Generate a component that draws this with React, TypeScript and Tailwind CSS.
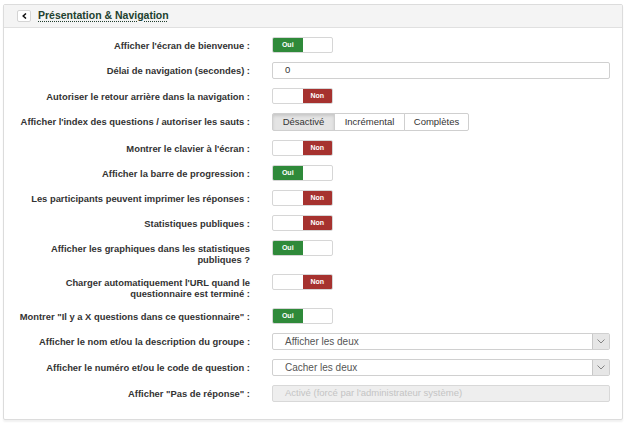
import React from "react";

type Row =
  | { label: string[]; kind: "toggle"; on: boolean }
  | { label: string[]; kind: "text"; value: string }
  | { label: string[]; kind: "select"; value: string }
  | { label: string[]; kind: "disabled"; value: string }
  | { label: string[]; kind: "segment" };

const rows: Row[] = [
  { label: ["Afficher l'écran de bienvenue :"], kind: "toggle", on: true },
  { label: ["Délai de navigation (secondes) :"], kind: "text", value: "0" },
  { label: ["Autoriser le retour arrière dans la navigation :"], kind: "toggle", on: false },
  { label: ["Afficher l'index des questions / autoriser les sauts :"], kind: "segment" },
  { label: ["Montrer le clavier à l'écran :"], kind: "toggle", on: false },
  { label: ["Afficher la barre de progression :"], kind: "toggle", on: true },
  { label: ["Les participants peuvent imprimer les réponses :"], kind: "toggle", on: false },
  { label: ["Statistiques publiques :"], kind: "toggle", on: false },
  { label: ["Afficher les graphiques dans les statistiques", "publiques ?"], kind: "toggle", on: true },
  { label: ["Charger automatiquement l'URL quand le", "questionnaire est terminé :"], kind: "toggle", on: false },
  { label: ['Montrer "Il y a X questions dans ce questionnaire" :'], kind: "toggle", on: true },
  { label: ["Afficher le nom et/ou la description du groupe :"], kind: "select", value: "Afficher les deux" },
  { label: ["Afficher le numéro et/ou le code de question :"], kind: "select", value: "Cacher les deux" },
  { label: ['Afficher "Pas de réponse" :'], kind: "disabled", value: "Activé (forcé par l'administrateur système)" },
];

function Toggle({ on }: { on: boolean }) {
  return (
    <div className="flex h-[16px] w-[61px] overflow-hidden rounded-[2px] border border-[#d6d6d6] bg-white text-[7px] font-bold text-white">
      {on ? (
        <>
          <div className="flex w-1/2 items-center justify-center bg-[#2f8a3a]">Oui</div>
          <div className="w-1/2" />
        </>
      ) : (
        <>
          <div className="w-1/2" />
          <div className="flex w-1/2 items-center justify-center bg-[#a6322f]">Non</div>
        </>
      )}
    </div>
  );
}

function Segment() {
  const items = [
    { t: "Désactivé", w: "w-[63px]", active: true },
    { t: "Incrémental", w: "w-[71px]", active: false },
    { t: "Complètes", w: "w-[65px]", active: false },
  ];
  return (
    <div className="flex h-[18px] text-[9.5px] text-[#333]">
      {items.map((it, i) => (
        <div
          key={it.t}
          className={`flex items-center justify-center border border-[#cfcfcf] ${it.w} ${
            i > 0 ? "-ml-px" : "rounded-l-[2px]"
          } ${i === 2 ? "rounded-r-[2px]" : ""} ${
            it.active ? "bg-[#e4e4e4] shadow-[inset_0_2px_3px_rgba(0,0,0,0.12)]" : "bg-white"
          }`}
        >
          {it.t}
        </div>
      ))}
    </div>
  );
}

function Control({ row }: { row: Row }) {
  if (row.kind === "toggle") return <Toggle on={row.on} />;
  if (row.kind === "segment") return <Segment />;
  if (row.kind === "text")
    return (
      <div className="flex h-[17px] w-full items-center rounded-[2px] border border-[#d0d0d0] bg-white pl-[12px] text-[9.5px] text-[#333]">
        {row.value}
      </div>
    );
  if (row.kind === "select")
    return (
      <div className="flex h-[17px] w-full items-center rounded-[2px] border border-[#d0d0d0] bg-white text-[10px] text-[#555]">
        <span className="flex-1 pl-[12px]">{row.value}</span>
        <span className="flex h-full w-[17px] items-center justify-center border-l border-[#c8c8c8] bg-[#e6e6e6]">
          <svg width="8" height="5" viewBox="0 0 8 5" fill="none">
            <path d="M0.5 0.5 L4 4 L7.5 0.5" stroke="#777" strokeWidth="0.9" />
          </svg>
        </span>
      </div>
    );
  return (
    <div className="flex h-[17px] w-full items-center rounded-[2px] border border-[#d8d8d8] bg-[#eeeeee] pl-[12px] text-[9.5px] text-[#c4c4c4]">
      {row.value}
    </div>
  );
}

export default function App() {
  return (
    <div className="min-h-screen bg-white pl-[3px] pt-[4px] font-['Liberation_Sans',Arial,sans-serif]">
      <div className="w-[620px] rounded-[2px] border border-[#dcdcdc] bg-white shadow-[0_2px_2px_rgba(0,0,0,0.06)]">
        <div className="flex h-[23px] items-center gap-[7px] border-b border-[#e0e0e0] bg-[#f4f4f4] pl-[13px]">
          <div className="flex h-[12px] w-[14px] items-center justify-center rounded-[2px] border border-[#d4d4d4] bg-white">
            <svg width="5" height="6" viewBox="0 0 5 6">
              <path d="M4 0.5 L1.2 3 L4 5.5" stroke="#111" strokeWidth="1.5" fill="none" />
            </svg>
          </div>
          <span className="text-[10.5px] font-bold text-[#21402e] underline decoration-dotted underline-offset-[2px]">
            Présentation &amp; Navigation
          </span>
        </div>
        <div className="flex flex-col gap-[9px] pb-[17px] pr-[12px] pt-[9px]">
          {rows.map((r, i) => (
            <div key={i} className="flex items-start">
              <div className="w-[246px] pt-[3px] text-right text-[9.4px] font-bold leading-[11px] text-[#333]">
                {r.label.map((l, j) => (
                  <div key={j}>{l}</div>
                ))}
              </div>
              <div className="ml-[22px] flex flex-1">
                <Control row={r} />
              </div>
            </div>
          ))}
        </div>
      </div>
    </div>
  );
}
